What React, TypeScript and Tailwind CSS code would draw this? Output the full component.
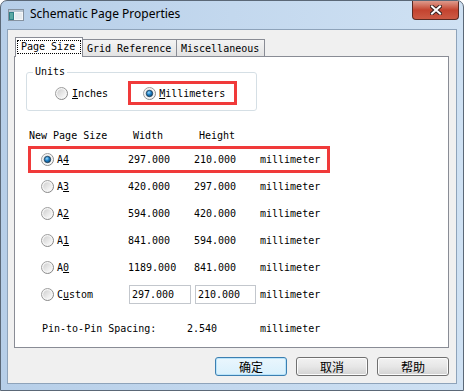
import React from "react";

function Radio({ on }: { on?: boolean }) {
  return (
    <svg width="13" height="13" viewBox="0 0 13 13" className="shrink-0">
      <defs>
        <linearGradient id="rdRing" x1="0" y1="0" x2="1" y2="1">
          <stop offset="0" stopColor="#a9a9a9" />
          <stop offset="1" stopColor="#7d7d7d" />
        </linearGradient>
        <linearGradient id="rdIn" x1="0" y1="0" x2="1" y2="1">
          <stop offset="0" stopColor="#cfcfcf" />
          <stop offset="1" stopColor="#fdfdfd" />
        </linearGradient>
        <radialGradient id="rdDot" cx="0.4" cy="0.35" r="0.75">
          <stop offset="0" stopColor="#9edcff" />
          <stop offset="0.45" stopColor="#1c80c8" />
          <stop offset="1" stopColor="#0d3c63" />
        </radialGradient>
      </defs>
      <circle cx="6.5" cy="6.5" r="6" fill="#f5f5f5" stroke="url(#rdRing)" />
      <circle cx="6.5" cy="6.5" r="4.3" fill="url(#rdIn)" />
      {on && <circle cx="6.5" cy="6.5" r="3.2" fill="url(#rdDot)" stroke="#1c3a52" strokeWidth="0.8" />}
    </svg>
  );
}

function TitleIcon() {
  return (
    <svg width="16" height="12" viewBox="0 0 16 12">
      <rect x="0.5" y="0.5" width="15" height="11" fill="#f4f6f8" stroke="#8592a0" />
      <rect x="1" y="1" width="14" height="2" fill="#b9c6d3" />
      <rect x="1" y="3" width="5" height="8" fill="#2f7f86" />
      <rect x="2" y="4" width="3" height="6" fill="#5aa9a3" />
      <rect x="7" y="4" width="7" height="6" fill="#e6ebef" />
    </svg>
  );
}

function CloseIcon() {
  return (
    <svg width="12" height="10" viewBox="0 0 12 10">
      <path d="M2 1.5 L10 8.5 M10 1.5 L2 8.5" stroke="#3a2320" strokeWidth="4" strokeLinecap="square" />
      <path d="M2 1.5 L10 8.5 M10 1.5 L2 8.5" stroke="#ffffff" strokeWidth="2" strokeLinecap="square" />
    </svg>
  );
}

const sizes = [
  { name: "A", key: "4", w: "297.000", h: "210.000", on: true },
  { name: "A", key: "3", w: "420.000", h: "297.000" },
  { name: "A", key: "2", w: "594.000", h: "420.000" },
  { name: "A", key: "1", w: "841.000", h: "594.000" },
  { name: "A", key: "0", w: "1189.000", h: "841.000" },
];

function Btn({ label, def }: { label: string; def?: boolean }) {
  return (
    <div
      className={`w-[72px] h-[19px] rounded-[3px] border flex items-center justify-center text-[12px] leading-none text-black font-['Noto_Sans_CJK_SC',sans-serif] ${
        def
          ? "border-[#3c7fb1] bg-gradient-to-b from-[#eaf6fd] to-[#d9f0fc] shadow-[inset_0_0_0_1px_#b9e4fb]"
          : "border-[#707070] bg-gradient-to-b from-[#f2f2f2] via-[#e7e7e7] to-[#d2d2d2] shadow-[inset_0_0_0_1px_#fcfcfc]"
      }`}
    >
      {label}
    </div>
  );
}

export default function App() {
  return (
    <div className="w-[464px] h-[391px] border border-[#5b6877] rounded-t-[7px] bg-gradient-to-r from-[#b6cee8] via-[#c3d8ee] to-[#cfe1f3] flex flex-col overflow-hidden">
      {/* title bar */}
      <div className="h-[28px] flex items-start">
        <div className="ml-[7px] mt-[8px]">
          <TitleIcon />
        </div>
        <div className="ml-[6px] mt-[5px] text-[12px] leading-[16px] text-black font-['Noto_Sans',sans-serif]">
          Schematic Page Properties
        </div>
        <div className="ml-auto mr-[4px] w-[47px] h-[19px] rounded-b-[4px] border border-t-0 border-[#5a2a22] bg-gradient-to-b from-[#dd9a8c] via-[#c3432f] to-[#cc5a44] flex items-center justify-center">
          <CloseIcon />
        </div>
      </div>

      {/* client area */}
      <div className="mx-[6px] h-[355px] border border-[#8ea3ba] bg-[#f0f0f0] pt-[7px] pl-[6px] flex flex-col font-['DejaVu_Sans_Mono',monospace] text-[10px] text-black">
        {/* tabs */}
        <div className="flex items-end h-[20px] pl-[1px]">
          <div className="relative z-10 w-[68px] h-[20px] bg-white border border-b-0 border-[#898c95] pt-[2px] px-[1px]">
            <div className="h-[14px] border border-dotted border-black flex items-center px-[3px] leading-[12px]">
              Page Size
            </div>
          </div>
          <div className="w-[94px] h-[18px] border border-l-0 border-b-0 border-[#898c95] bg-gradient-to-b from-[#f4f4f4] to-[#e2e2e2] flex items-start pt-[3px] pl-[4px] leading-[12px]">
            Grid Reference
          </div>
          <div className="w-[88px] h-[18px] border border-l-0 border-b-0 border-[#898c95] bg-gradient-to-b from-[#f4f4f4] to-[#e2e2e2] flex items-start pt-[3px] pl-[4px] leading-[12px]">
            Miscellaneous
          </div>
        </div>

        {/* panel */}
        <div className="relative -mt-px w-[435px] h-[292px] border border-[#898c95] bg-white flex flex-col">
          <fieldset className="ml-[11px] mt-[9px] w-[231px] border border-[#d5dfe5] rounded-[3px]">
            <legend className="ml-[6px] px-[2px] leading-[12px]">Units</legend>
            <div className="h-[32px] pb-[2px] pl-[28px] flex items-center">
              <div className="flex items-center gap-[4px]">
                <Radio />
                <span>
                  <u>I</u>nches
                </span>
              </div>
              <div className="ml-[20px] w-[109px] h-[24px] border-[3px] border-[#f03a3a] pl-[12px] flex items-center gap-[3px]">
                <Radio on />
                <span>
                  <u>M</u>illimeters
                </span>
              </div>
            </div>
          </fieldset>

          <div className="ml-[14px] mt-[16px] mb-[3px] h-[16px] flex items-center">
            <span className="w-[104px]">New Page Size</span>
            <span className="w-[66px]">Width</span>
            <span>Height</span>
          </div>

          <div className="ml-[13px] flex flex-col">
            {sizes.map((s) => (
              <div
                key={s.key}
                className={`w-[302px] h-[27px] border-[3px] pl-[10px] flex items-center ${
                  s.on ? "border-[#f03a3a]" : "border-transparent"
                }`}
              >
                <div className="w-[87px] flex items-center gap-[3px]">
                  <Radio on={s.on} />
                  <span>
                    {s.name}
                    <u>{s.key}</u>
                  </span>
                </div>
                <span className="w-[66px]">{s.w}</span>
                <span className="w-[66px]">{s.h}</span>
                <span className="whitespace-nowrap">millimeter</span>
              </div>
            ))}
            <div className="w-[302px] h-[27px] border-[3px] border-transparent pl-[10px] flex items-center">
              <div className="w-[87px] flex items-center gap-[3px]">
                <Radio />
                <span>
                  C<u>u</u>stom
                </span>
              </div>
              <div className="w-[66px]">
                <div className="ml-px w-[62px] h-[19px] border border-[#c3c7cd] flex items-center pl-[2px]">297.000</div>
              </div>
              <div className="w-[66px]">
                <div className="ml-px w-[61px] h-[19px] border border-[#c3c7cd] flex items-center pl-[2px]">210.000</div>
              </div>
              <span className="whitespace-nowrap">millimeter</span>
            </div>
          </div>

          <div className="ml-[27px] mt-[7px] h-[27px] flex items-center">
            <span className="w-[145px]">Pin-to-Pin Spacing:</span>
            <span className="w-[73px]">2.540</span>
            <span className="whitespace-nowrap">millimeter</span>
          </div>
        </div>

        {/* buttons */}
        <div className="mt-[9px] w-[435px] flex justify-end gap-[9px]">
          <Btn label="确定" def />
          <Btn label="取消" />
          <Btn label="帮助" />
        </div>
      </div>
    </div>
  );
}
